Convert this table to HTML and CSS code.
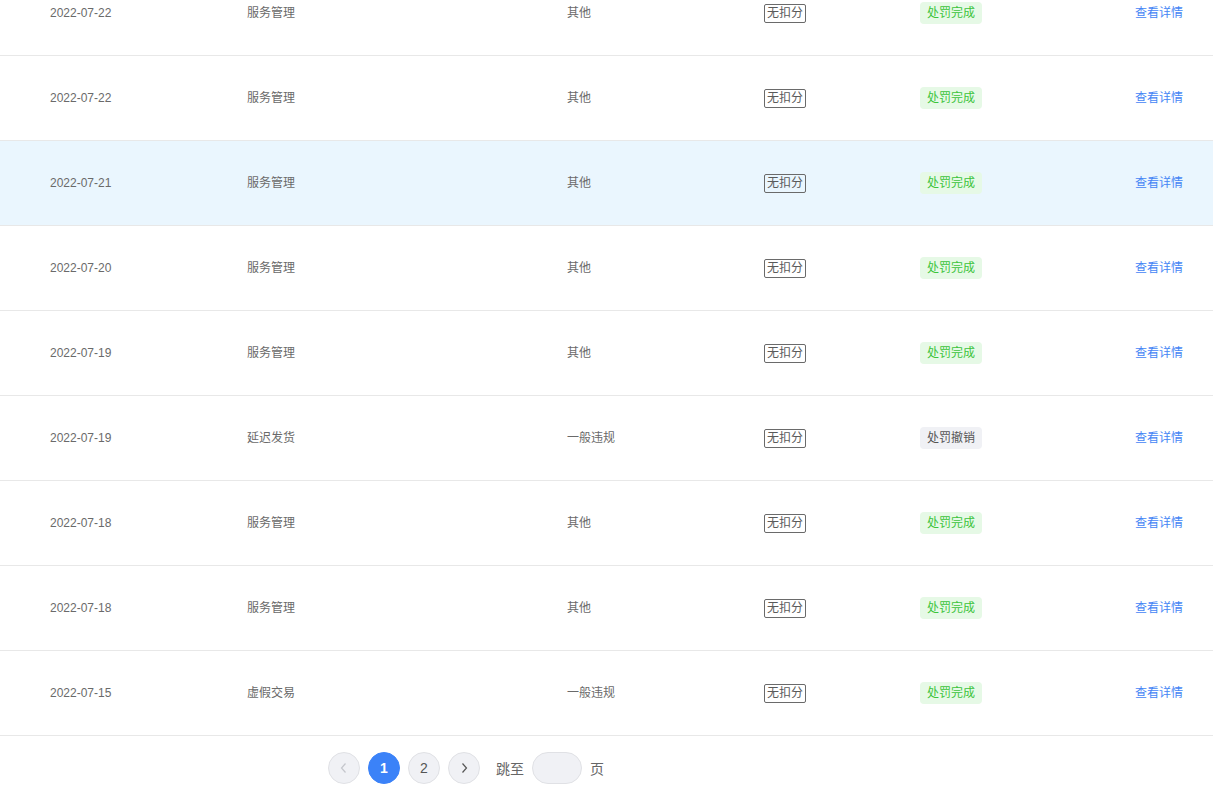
FILE: index.html
```html
<!DOCTYPE html>
<html lang="zh-CN">
<head>
<meta charset="utf-8">
<title>处罚记录</title>
<link rel="stylesheet" href="styles.css">
</head>
<body>
<div class="page">
  <div class="table">
    <div class="row">
      <div class="cell date">2022-07-22</div>
      <div class="cell">服务管理</div>
      <div class="cell">其他</div>
      <div class="cell"><span class="score">无扣分</span></div>
      <div class="cell"><span class="status done">处罚完成</span></div>
      <div class="cell"><a class="link">查看详情</a></div>
    </div>
    <div class="row">
      <div class="cell date">2022-07-22</div>
      <div class="cell">服务管理</div>
      <div class="cell">其他</div>
      <div class="cell"><span class="score">无扣分</span></div>
      <div class="cell"><span class="status done">处罚完成</span></div>
      <div class="cell"><a class="link">查看详情</a></div>
    </div>
    <div class="row hover">
      <div class="cell date">2022-07-21</div>
      <div class="cell">服务管理</div>
      <div class="cell">其他</div>
      <div class="cell"><span class="score">无扣分</span></div>
      <div class="cell"><span class="status done">处罚完成</span></div>
      <div class="cell"><a class="link">查看详情</a></div>
    </div>
    <div class="row">
      <div class="cell date">2022-07-20</div>
      <div class="cell">服务管理</div>
      <div class="cell">其他</div>
      <div class="cell"><span class="score">无扣分</span></div>
      <div class="cell"><span class="status done">处罚完成</span></div>
      <div class="cell"><a class="link">查看详情</a></div>
    </div>
    <div class="row">
      <div class="cell date">2022-07-19</div>
      <div class="cell">服务管理</div>
      <div class="cell">其他</div>
      <div class="cell"><span class="score">无扣分</span></div>
      <div class="cell"><span class="status done">处罚完成</span></div>
      <div class="cell"><a class="link">查看详情</a></div>
    </div>
    <div class="row">
      <div class="cell date">2022-07-19</div>
      <div class="cell">延迟发货</div>
      <div class="cell">一般违规</div>
      <div class="cell"><span class="score">无扣分</span></div>
      <div class="cell"><span class="status revoked">处罚撤销</span></div>
      <div class="cell"><a class="link">查看详情</a></div>
    </div>
    <div class="row">
      <div class="cell date">2022-07-18</div>
      <div class="cell">服务管理</div>
      <div class="cell">其他</div>
      <div class="cell"><span class="score">无扣分</span></div>
      <div class="cell"><span class="status done">处罚完成</span></div>
      <div class="cell"><a class="link">查看详情</a></div>
    </div>
    <div class="row">
      <div class="cell date">2022-07-18</div>
      <div class="cell">服务管理</div>
      <div class="cell">其他</div>
      <div class="cell"><span class="score">无扣分</span></div>
      <div class="cell"><span class="status done">处罚完成</span></div>
      <div class="cell"><a class="link">查看详情</a></div>
    </div>
    <div class="row">
      <div class="cell date">2022-07-15</div>
      <div class="cell">虚假交易</div>
      <div class="cell">一般违规</div>
      <div class="cell"><span class="score">无扣分</span></div>
      <div class="cell"><span class="status done">处罚完成</span></div>
      <div class="cell"><a class="link">查看详情</a></div>
    </div>
  </div>
  <div class="pager">
    <button class="pg disabled" aria-label="上一页">
      <svg width="10" height="12" viewBox="0 0 10 12"><path d="M6.5 1.5 L2.5 6 L6.5 10.5" fill="none" stroke="#c4c6cc" stroke-width="1.2"/></svg>
    </button>
    <button class="pg active">1</button>
    <button class="pg">2</button>
    <button class="pg" aria-label="下一页">
      <svg width="10" height="12" viewBox="0 0 10 12"><path d="M3.5 1.5 L7.5 6 L3.5 10.5" fill="none" stroke="#555" stroke-width="1.2"/></svg>
    </button>
    <span class="jump">跳至</span>
    <input class="jump-input" type="text">
    <span class="jump">页</span>
  </div>
</div>
</body>
</html>
```

FILE: styles.css
```css
html, body {
  margin: 0;
  padding: 0;
  background: #fff;
  overflow: hidden;
}
body {
  font-family: "Liberation Sans", "Noto Sans CJK SC", sans-serif;
  font-size: 12px;
  color: #666;
}
.page {
  width: 1213px;
}
.table {
  margin-top: -29px;
}
.row {
  display: grid;
  grid-template-columns: 197px 320px 197px 156px 215px 1fr;
  height: 84px;
  padding-left: 50px;
  border-bottom: 1px solid #e8e8e8;
  align-items: center;
}
.row.hover {
  background: #eaf6fe;
}
.cell {
  display: flex;
  align-items: center;
  line-height: 18px;
  color: #6a6a6a;
}
.score {
  display: inline-block;
  border: 1px solid #6a6a6a;
  border-radius: 2px;
  padding: 0 2px;
  line-height: 17px;
  color: #5a5a5a;
}
.status {
  display: inline-block;
  padding: 0 7px;
  height: 22px;
  line-height: 22px;
  border-radius: 4px;
}
.status.done {
  background: #e6f9e6;
  color: #3cc43c;
}
.status.revoked {
  background: #f0f1f5;
  color: #555;
}
.link {
  color: #4585f5;
  cursor: pointer;
}
.pager {
  display: flex;
  align-items: center;
  gap: 8px;
  padding: 16px 0 0 328px;
}
.pg {
  width: 32px;
  height: 32px;
  border-radius: 50%;
  border: 1px solid #e0e1e5;
  background: #f0f1f5;
  color: #555;
  font-family: "Liberation Sans", sans-serif;
  font-size: 14px;
  display: flex;
  align-items: center;
  justify-content: center;
  padding: 0;
  box-sizing: border-box;
}
.pg.active {
  background: #3b82f8;
  border-color: #3b82f8;
  color: #fff;
  font-weight: bold;
}
.jump {
  font-size: 14px;
  color: #666;
  margin-left: 8px;
}
.jump-input {
  width: 50px;
  height: 32px;
  box-sizing: border-box;
  border: 1px solid #e0e1e5;
  border-radius: 16px;
  background: #f0f1f5;
  outline: none;
}
.jump-input + .jump {
  margin-left: 0;
}
```
